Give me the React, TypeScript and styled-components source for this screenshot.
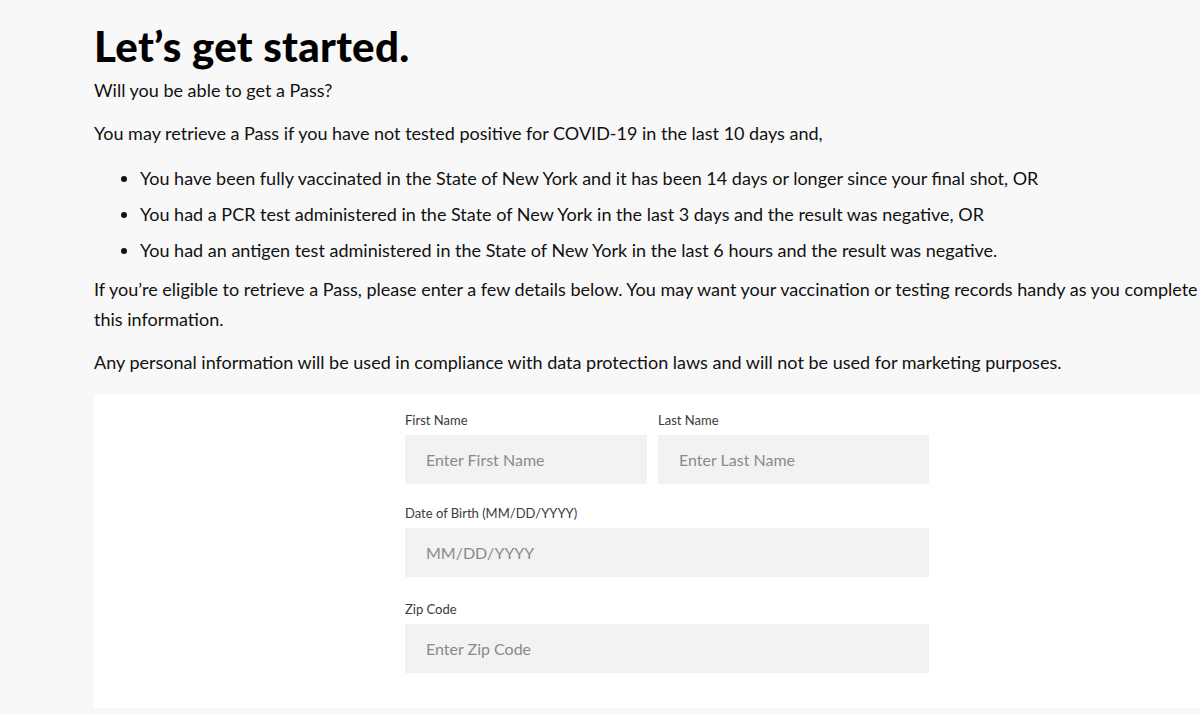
import React from "react";
import styled, { createGlobalStyle } from "styled-components";

const GlobalStyle = createGlobalStyle`
  html, body {
    margin: 0;
    padding: 0;
    background: #f8f8f8;
    overflow: hidden;
  }
  body {
    font-family: Lato, "Liberation Sans", sans-serif;
    color: #111;
  }
`;

const Page = styled.main`
  width: 1146px;
  padding: 24px 0 0 94px;
`;

const Heading = styled.h1`
  margin: 0 0 7px;
  font-size: 42px;
  font-weight: 900;
  line-height: 44px;
  letter-spacing: 0.3px;
  color: #000;
`;

const Text = styled.p`
  max-width: 1120px;
  margin: 0 0 13px;
  font-size: 18px;
  line-height: 30px;
`;

const List = styled.ul`
  margin: 15px 0 9px;
  padding: 0 0 0 46px;

  li {
    font-size: 18px;
    line-height: 30px;
    margin-bottom: 6px;
  }
`;

const Panel = styled.section`
  margin-top: 18px;
  background: #fff;
  display: flex;
  justify-content: center;
  padding: 17px 0 35px;
`;

const Form = styled.form`
  width: 524px;
  display: flex;
  flex-direction: column;
`;

const Row = styled.div<{ cols: string; space: number }>`
  display: grid;
  grid-template-columns: ${(p) => p.cols};
  gap: 11px;
  margin-top: ${(p) => p.space}px;
`;

const Field = styled.label`
  display: flex;
  flex-direction: column;
  gap: 7px;
  font-size: 13px;
  line-height: 16px;
  color: #3a3a3a;
`;

const Input = styled.input`
  height: 49px;
  box-sizing: border-box;
  border: none;
  background: #f2f2f2;
  padding: 0 21px;
  font-family: Lato, "Liberation Sans", sans-serif;
  font-size: 16px;
  color: #222;
  outline: none;

  &::placeholder {
    color: #8a8a8a;
  }
`;

export default function App() {
  return (
    <>
      <GlobalStyle />
      <Page>
        <Heading>Let’s get started.</Heading>
        <Text>Will you be able to get a Pass?</Text>
        <Text>You may retrieve a Pass if you have not tested positive for COVID-19 in the last 10 days and,</Text>
        <List>
          <li>You have been fully vaccinated in the State of New York and it has been 14 days or longer since your final shot, OR</li>
          <li>You had a PCR test administered in the State of New York in the last 3 days and the result was negative, OR</li>
          <li>You had an antigen test administered in the State of New York in the last 6 hours and the result was negative.</li>
        </List>
        <Text>If you’re eligible to retrieve a Pass, please enter a few details below. You may want your vaccination or testing records handy as you complete this information.</Text>
        <Text>Any personal information will be used in compliance with data protection laws and will not be used for marketing purposes.</Text>
        <Panel>
          <Form>
            <Row cols="242px 271px" space={0}>
              <Field>
                First Name
                <Input placeholder="Enter First Name" />
              </Field>
              <Field>
                Last Name
                <Input placeholder="Enter Last Name" />
              </Field>
            </Row>
            <Row cols="1fr" space={21}>
              <Field>
                Date of Birth (MM/DD/YYYY)
                <Input placeholder="MM/DD/YYYY" />
              </Field>
            </Row>
            <Row cols="1fr" space={24}>
              <Field>
                Zip Code
                <Input placeholder="Enter Zip Code" />
              </Field>
            </Row>
          </Form>
        </Panel>
      </Page>
    </>
  );
}
